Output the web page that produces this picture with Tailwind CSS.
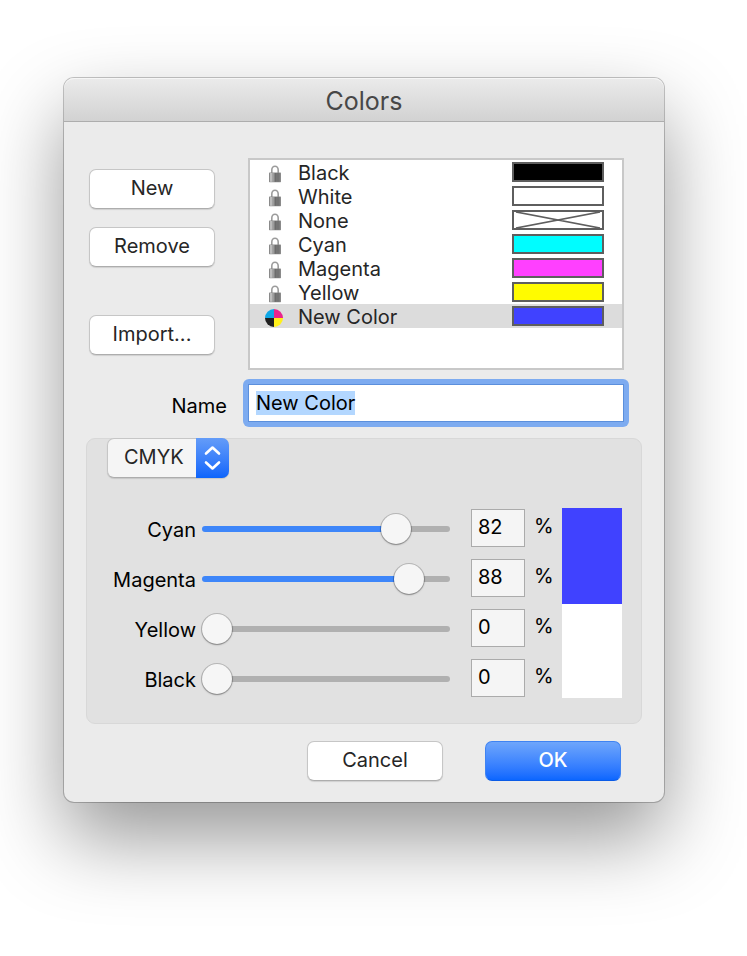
<!DOCTYPE html>
<html lang="en">

<head>
    <meta charset="UTF-8">
    <meta name="viewport" content="width=device-width, initial-scale=1.0">
    <title>Colors</title>
    <script src="https://cdn.jsdelivr.net/npm/@tailwindcss/browser@4"></script>
</head>

<body class="min-h-screen bg-white pt-[78px] pr-[83px] pb-[154px] pl-16 font-['Inter','Liberation_Sans',sans-serif] text-[20px] leading-6 text-black">
    <!-- Shared icons -->
    <svg class="hidden" aria-hidden="true">
        <symbol id="lock" viewBox="-5 0 20 18">
            <path d="M2.8 9V5a3.2 3.7 0 0 1 6.4 0V9" fill="none" stroke="#9c9c9c" stroke-width="1.6" />
            <rect x="0" y="7.6" width="12" height="9.6" rx="0.6" fill="#8a8a8a" />
            <rect x="1" y="8" width="2.6" height="8.8" fill="#bdbdbd" />
            <rect x="3.6" y="8" width="2" height="8.8" fill="#9c9c9c" />
            <rect x="5.6" y="8" width="2" height="8.8" fill="#6c6c6c" />
            <rect x="7.6" y="8" width="3" height="8.8" fill="#747474" />
        </symbol>
    </svg>

    <form class="w-full rounded-[10px] bg-[#ebebeb] shadow-[0_0_0_1px_rgba(0,0,0,0.22),0_36px_80px_rgba(0,0,0,0.41)]">
        <!-- Title bar -->
        <header class="rounded-t-[10px] border-b border-[#adadad] bg-linear-to-b from-[#ebebeb] to-[#d2d2d2] pt-[11px] pb-2 shadow-[inset_0_1px_0_#f6f6f6]">
            <h1 class="text-center text-[25px] leading-6 text-[#474747]">Colors</h1>
        </header>

        <div class="pt-9 pr-10 pb-[21px] pl-[25px]">
            <!-- Color list -->
            <div class="flex gap-[33px]">
                <div class="flex w-[126px] shrink-0 flex-col pt-[11px]">
                    <button type="button" class="h-10 rounded-[7px] border border-[#c6c6c6] border-b-[#adadad] bg-white pb-0.5 text-[#262626] shadow-[0_1px_1px_rgba(0,0,0,0.12)]">New</button>
                    <button type="button" class="mt-[18px] h-10 rounded-[7px] border border-[#c6c6c6] border-b-[#adadad] bg-white pb-0.5 text-[#262626] shadow-[0_1px_1px_rgba(0,0,0,0.12)]">Remove</button>
                    <button type="button" class="mt-12 h-10 rounded-[7px] border border-[#c6c6c6] border-b-[#adadad] bg-white pb-0.5 text-[#262626] shadow-[0_1px_1px_rgba(0,0,0,0.12)]">Import...</button>
                </div>
                <ul class="min-h-[212px] flex-1 border-2 border-[#c8c8c8] bg-white text-[#262626]">
                    <li class="flex h-6 items-center pr-[18px] pl-3.5">
                        <svg class="mt-1 h-[18px] w-5"><use href="#lock" /></svg>
                        <span class="ml-3.5 flex-1 pt-0.5">Black</span>
                        <span class="h-5 w-[92px] border-2 border-[#5e5e5e] bg-black"></span>
                    </li>
                    <li class="flex h-6 items-center pr-[18px] pl-3.5">
                        <svg class="mt-1 h-[18px] w-5"><use href="#lock" /></svg>
                        <span class="ml-3.5 flex-1 pt-0.5">White</span>
                        <span class="h-5 w-[92px] border-2 border-[#5e5e5e] bg-white"></span>
                    </li>
                    <li class="flex h-6 items-center pr-[18px] pl-3.5">
                        <svg class="mt-1 h-[18px] w-5"><use href="#lock" /></svg>
                        <span class="ml-3.5 flex-1 pt-0.5">None</span>
                        <span class="h-5 w-[92px] border-2 border-[#5e5e5e] bg-white">
                            <svg class="block h-4 w-[88px]" viewBox="0 0 88 16">
                                <path d="M2 0L86 16M2 16L86 0" stroke="#5e5e5e" stroke-width="1.7" />
                            </svg>
                        </span>
                    </li>
                    <li class="flex h-6 items-center pr-[18px] pl-3.5">
                        <svg class="mt-1 h-[18px] w-5"><use href="#lock" /></svg>
                        <span class="ml-3.5 flex-1 pt-0.5">Cyan</span>
                        <span class="h-5 w-[92px] border-2 border-[#5e5e5e] bg-[#00fdff]"></span>
                    </li>
                    <li class="flex h-6 items-center pr-[18px] pl-3.5">
                        <svg class="mt-1 h-[18px] w-5"><use href="#lock" /></svg>
                        <span class="ml-3.5 flex-1 pt-0.5">Magenta</span>
                        <span class="h-5 w-[92px] border-2 border-[#5e5e5e] bg-[#ff40ff]"></span>
                    </li>
                    <li class="flex h-6 items-center pr-[18px] pl-3.5">
                        <svg class="mt-1 h-[18px] w-5"><use href="#lock" /></svg>
                        <span class="ml-3.5 flex-1 pt-0.5">Yellow</span>
                        <span class="h-5 w-[92px] border-2 border-[#5e5e5e] bg-[#fffb00]"></span>
                    </li>
                    <li class="flex h-6 items-center bg-[#dcdcdc] pr-[18px] pl-3.5">
                        <svg class="mt-1 h-[18px] w-5" viewBox="0 0 18 18">
                            <path d="M9 9H0a9 9 0 0 1 9-9z" fill="#0fa7e6" />
                            <path d="M9 9V0a9 9 0 0 1 9 9z" fill="#e9258c" />
                            <path d="M9 9h9a9 9 0 0 1-9 9z" fill="#fff01a" />
                            <path d="M9 9v9a9 9 0 0 1-9-9z" fill="#1f1f1f" />
                        </svg>
                        <span class="ml-3.5 flex-1 pt-0.5">New Color</span>
                        <span class="h-5 w-[92px] border-2 border-[#5e5e5e] bg-[#4042ff]"></span>
                    </li>
                </ul>
            </div>

            <!-- Name -->
            <div class="mt-[9px] -mr-[5px] flex items-center gap-4">
                <label for="name" class="w-[138px] shrink-0 pt-1.5 text-right">Name</label>
                <div class="min-w-0 flex-1 rounded-md bg-[#7dabf0] p-[5px]">
                    <input id="name" type="text" value="New Color"
                        class="block h-[38px] w-full border border-[#5b8fdc] bg-white px-[7px] outline-none selection:bg-[#b3d7ff] selection:text-black">
                </div>
            </div>

            <!-- Color model -->
            <section class="mt-[11px] -mr-[18px] -ml-[3px] rounded-[9px] border border-[#d8d8d8] bg-[#e1e1e1] pr-[19px] pb-[25px]">
                <div class="relative -mt-px ml-5 h-10 w-[122px]">
                    <select aria-label="Color model"
                        class="h-10 w-full appearance-none rounded-[7px] border border-[#c6c6c6] border-b-[#adadad] bg-[#f5f5f5] pb-0.5 pl-4 text-[#262626] shadow-[0_1px_1px_rgba(0,0,0,0.12)]">
                        <option>CMYK</option>
                        <option>RGB</option>
                    </select>
                    <span class="pointer-events-none absolute inset-y-0 right-0 w-[33px] rounded-r-[7px] bg-linear-to-b from-[#649cf8] to-[#0a64fb]">
                        <svg class="h-10 w-[33px]" viewBox="0 0 33 40" fill="none" stroke="#fff" stroke-width="2.6" stroke-linecap="round" stroke-linejoin="round">
                            <path d="M10 15.5l6.5-6 6.5 6M10 24.5l6.5 6 6.5-6" />
                        </svg>
                    </span>
                </div>

                <div class="mt-[30px] flex gap-2.5">
                    <div class="flex min-w-0 flex-1 flex-col gap-3 pt-px">
                        <div class="flex h-[38px] items-center">
                            <label for="cyan" class="w-[109px] shrink-0 pt-1 text-right">Cyan</label>
                            <input id="cyan" type="range" min="0" max="100" value="82" style="--fill: 82%"
                                class="mt-0.5 ml-1.5 h-1.5 min-w-0 flex-1 appearance-none rounded-full bg-[linear-gradient(to_right,#3e86f9_var(--fill),#b0b0b0_var(--fill))] [&::-webkit-slider-thumb]:size-[30px] [&::-webkit-slider-thumb]:appearance-none [&::-webkit-slider-thumb]:rounded-full [&::-webkit-slider-thumb]:bg-[#f6f6f6] [&::-webkit-slider-thumb]:shadow-[0_0_0_1px_rgba(0,0,0,0.18),0_1px_2px_rgba(0,0,0,0.3)]">
                            <input type="text" aria-label="Cyan percent" value="82" class="ml-[21px] h-[38px] w-[54px] border border-[#ababab] bg-[#f5f5f5] px-1.5 pb-0.5">
                            <span class="ml-[9px] w-[18px] pb-1">%</span>
                        </div>
                        <div class="flex h-[38px] items-center">
                            <label for="magenta" class="w-[109px] shrink-0 pt-1 text-right">Magenta</label>
                            <input id="magenta" type="range" min="0" max="100" value="88" style="--fill: 88%"
                                class="mt-0.5 ml-1.5 h-1.5 min-w-0 flex-1 appearance-none rounded-full bg-[linear-gradient(to_right,#3e86f9_var(--fill),#b0b0b0_var(--fill))] [&::-webkit-slider-thumb]:size-[30px] [&::-webkit-slider-thumb]:appearance-none [&::-webkit-slider-thumb]:rounded-full [&::-webkit-slider-thumb]:bg-[#f6f6f6] [&::-webkit-slider-thumb]:shadow-[0_0_0_1px_rgba(0,0,0,0.18),0_1px_2px_rgba(0,0,0,0.3)]">
                            <input type="text" aria-label="Magenta percent" value="88" class="ml-[21px] h-[38px] w-[54px] border border-[#ababab] bg-[#f5f5f5] px-1.5 pb-0.5">
                            <span class="ml-[9px] w-[18px] pb-1">%</span>
                        </div>
                        <div class="flex h-[38px] items-center">
                            <label for="yellow" class="w-[109px] shrink-0 pt-1 text-right">Yellow</label>
                            <input id="yellow" type="range" min="0" max="100" value="0" style="--fill: 0%"
                                class="mt-0.5 ml-1.5 h-1.5 min-w-0 flex-1 appearance-none rounded-full bg-[linear-gradient(to_right,#3e86f9_var(--fill),#b0b0b0_var(--fill))] [&::-webkit-slider-thumb]:size-[30px] [&::-webkit-slider-thumb]:appearance-none [&::-webkit-slider-thumb]:rounded-full [&::-webkit-slider-thumb]:bg-[#f6f6f6] [&::-webkit-slider-thumb]:shadow-[0_0_0_1px_rgba(0,0,0,0.18),0_1px_2px_rgba(0,0,0,0.3)]">
                            <input type="text" aria-label="Yellow percent" value="0" class="ml-[21px] h-[38px] w-[54px] border border-[#ababab] bg-[#f5f5f5] px-1.5 pb-0.5">
                            <span class="ml-[9px] w-[18px] pb-1">%</span>
                        </div>
                        <div class="flex h-[38px] items-center">
                            <label for="black" class="w-[109px] shrink-0 pt-1 text-right">Black</label>
                            <input id="black" type="range" min="0" max="100" value="0" style="--fill: 0%"
                                class="mt-0.5 ml-1.5 h-1.5 min-w-0 flex-1 appearance-none rounded-full bg-[linear-gradient(to_right,#3e86f9_var(--fill),#b0b0b0_var(--fill))] [&::-webkit-slider-thumb]:size-[30px] [&::-webkit-slider-thumb]:appearance-none [&::-webkit-slider-thumb]:rounded-full [&::-webkit-slider-thumb]:bg-[#f6f6f6] [&::-webkit-slider-thumb]:shadow-[0_0_0_1px_rgba(0,0,0,0.18),0_1px_2px_rgba(0,0,0,0.3)]">
                            <input type="text" aria-label="Black percent" value="0" class="ml-[21px] h-[38px] w-[54px] border border-[#ababab] bg-[#f5f5f5] px-1.5 pb-0.5">
                            <span class="ml-[9px] w-[18px] pb-1">%</span>
                        </div>
                    </div>
                    <!-- New color over old color -->
                    <div class="flex w-[60px] shrink-0 flex-col">
                        <div class="h-24 bg-[#4042ff]"></div>
                        <div class="h-[94px] bg-white"></div>
                    </div>
                </div>
            </section>

            <!-- Actions -->
            <div class="mt-[17px] flex justify-end gap-[42px] pr-[3px]">
                <button type="button" class="h-10 w-[136px] rounded-[7px] border border-[#c6c6c6] border-b-[#adadad] bg-white pb-0.5 text-[#262626] shadow-[0_1px_1px_rgba(0,0,0,0.12)]">Cancel</button>
                <button type="submit" class="h-10 w-[136px] rounded-[7px] border border-[#3f83f2] border-b-[#0a5be6] bg-linear-to-b from-[#6ea5fb] to-[#0a66ff] pb-0.5 font-medium text-white">OK</button>
            </div>
        </div>
    </form>

    <script>
        const nameInput = document.getElementById('name');
        nameInput.focus();
        nameInput.select();

        document.querySelectorAll('input[type=range]').forEach((slider) => {
            slider.addEventListener('input', () => {
                slider.style.setProperty('--fill', slider.value + '%');
                slider.nextElementSibling.value = slider.value;
            });
        });
    </script>
</body>

</html>
